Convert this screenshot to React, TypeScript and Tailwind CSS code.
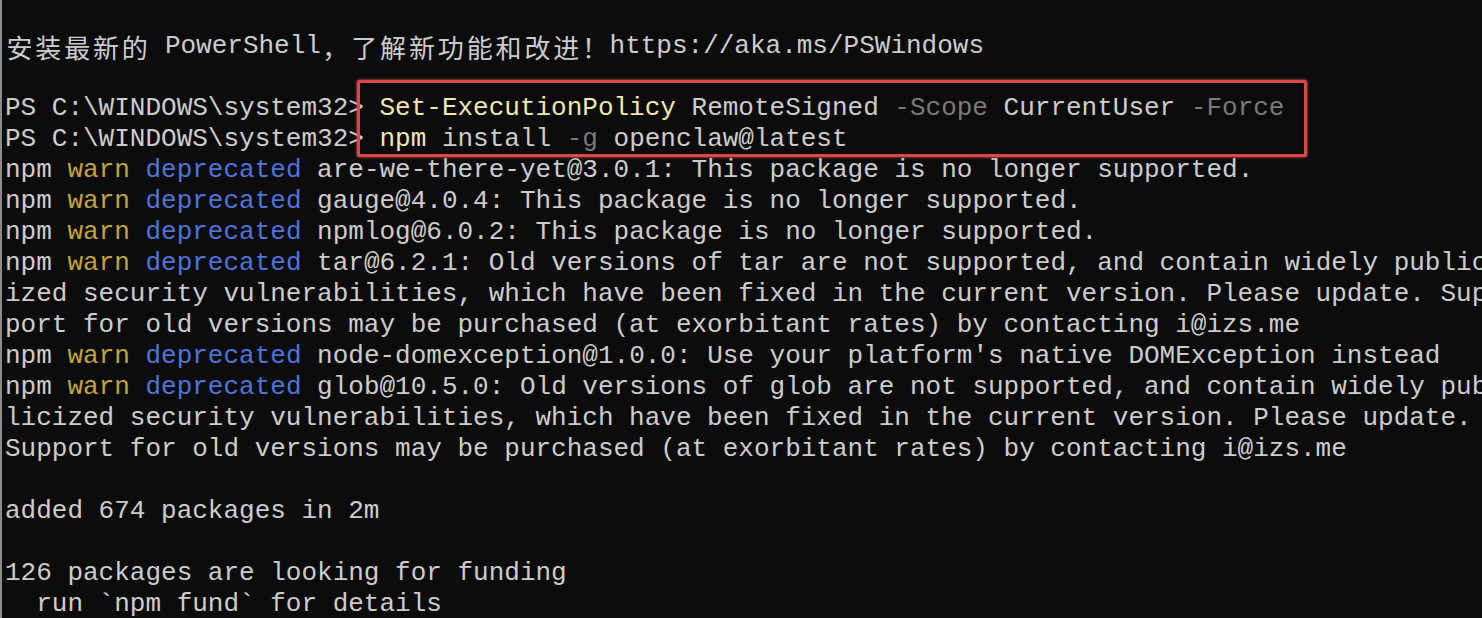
import React from "react";

type Seg = [string, string?];

const W = "text-[#cccccc]";
const Y = "text-[#c4a43a]";
const B = "text-[#4f74d9]";
const C = "text-[#f0e8ae]";
const G = "text-[#7a7a7a]";

const isWide = (ch: string) => /[\u3000-\u9fff\uff00-\uffef]/.test(ch);

function Txt({ s }: { s: string }) {
  const parts: React.ReactNode[] = [];
  let buf = "";
  let k = 0;
  for (const ch of s) {
    if (isWide(ch)) {
      if (buf) {
        parts.push(buf);
        buf = "";
      }
      parts.push(
        <span
          key={k++}
          className="inline-block align-top h-[31px] w-[2ch] text-center leading-[31px] font-['Noto_Sans_CJK_SC',sans-serif]"
        >
          {ch}
        </span>
      );
    } else buf += ch;
  }
  if (buf) parts.push(buf);
  return <>{parts}</>;
}

function Line({ segs }: { segs: Seg[] }) {
  return (
    <div className="h-[31px] whitespace-pre">
      {segs.map(([t, c], i) => (
        <span key={i} className={c ?? W}>
          <Txt s={t} />
        </span>
      ))}
    </div>
  );
}

const warn = (rest: string): Seg[] => [
  ["npm "],
  ["warn", Y],
  [" "],
  ["deprecated", B],
  [" " + rest],
];

const lines: Seg[][] = [
  [["安装最新的 PowerShell，了解新功能和改进！https://aka.ms/PSWindows"]],
  [[""]],
  [
    ["PS C:\\WINDOWS\\system32> "],
    ["Set-ExecutionPolicy", C],
    [" RemoteSigned "],
    ["-Scope", G],
    [" CurrentUser "],
    ["-Force", G],
  ],
  [["PS C:\\WINDOWS\\system32> "], ["npm", C], [" install "], ["-g", G], [" openclaw@latest"]],
  warn("are-we-there-yet@3.0.1: This package is no longer supported."),
  warn("gauge@4.0.4: This package is no longer supported."),
  warn("npmlog@6.0.2: This package is no longer supported."),
  warn("tar@6.2.1: Old versions of tar are not supported, and contain widely public"),
  [["ized security vulnerabilities, which have been fixed in the current version. Please update. Sup"]],
  [["port for old versions may be purchased (at exorbitant rates) by contacting i@izs.me"]],
  warn("node-domexception@1.0.0: Use your platform's native DOMException instead"),
  warn("glob@10.5.0: Old versions of glob are not supported, and contain widely pub"),
  [["licized security vulnerabilities, which have been fixed in the current version. Please update."]],
  [["Support for old versions may be purchased (at exorbitant rates) by contacting i@izs.me"]],
  [[""]],
  [["added 674 packages in 2m"]],
  [[""]],
  [["126 packages are looking for funding"]],
  [["  run `npm fund` for details"]],
];

export default function App() {
  return (
    <div className="w-[1482px] h-[618px] overflow-hidden bg-[#0c0c0c] border-l-2 border-[#8c8c8c]">
      <div className="relative pt-[31px] pl-[3px] font-['Liberation_Mono',monospace] text-[26px] leading-[31px] text-[#cccccc]">
        {lines.map((l, i) => (
          <Line key={i} segs={l} />
        ))}
        <div className="absolute left-[355px] top-[80px] w-[950px] h-[77px] border-[3px] border-[#d9474c] rounded-[2px] shadow-[0_0_3px_#e86a6a]" />
      </div>
    </div>
  );
}
